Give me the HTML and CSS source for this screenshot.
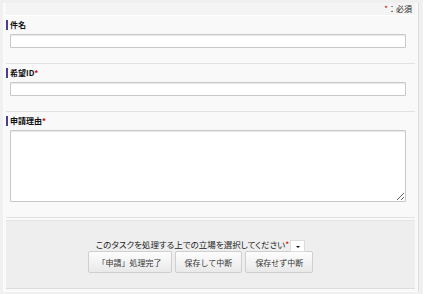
FILE: index.html
```html
<!DOCTYPE html>
<html lang="ja">
<head>
	<meta http-equiv="Content-Type" content="text/html; charset=UTF-8">
	<meta name="viewport" content="width=device-width, initial-scale=1">
	<title>申請</title>
	<link rel="stylesheet" href="styles.css">
</head>
<body>
<div class="form">
  <div class="note"><span class="req">*</span>：必須</div>

  <div class="field">
    <div class="label">件名</div>
    <input class="text" type="text">
  </div>

  <div class="field">
    <div class="label">希望ID<span class="req">*</span></div>
    <input class="text" type="text">
  </div>

  <div class="field">
    <div class="label">申請理由<span class="req">*</span></div>
    <textarea class="area"></textarea>
  </div>

  <div class="actions">
    <div class="role">
      このタスクを処理する上での立場を選択してください<span class="req">*</span><span class="dropdown"></span>
    </div>
    <div class="buttons">
      <button class="btn">「申請」処理完了</button>
      <button class="btn">保存して中断</button>
      <button class="btn">保存せず中断</button>
    </div>
  </div>
</div>
</body>
</html>
```

FILE: styles.css
```css
html,
body {
  width: 100%;
  height: 100%;
}
body {
  margin: 0;
  padding: 3px 4px 0 3px;
  box-sizing: border-box;
  background-color: #f0f0f0;
  font-family: "Noto Sans CJK JP", "Liberation Sans", sans-serif;
  font-size: 8px;
  color: #222;
}
.form {
  background-color: #f9f9f9;
  border-left: 1px solid #fcfcfc;
  border-right: 1px solid #dcdcdc;
  border-bottom: 1px solid #fcfcfc;
  padding: 0 3px 2px 2px;
}
.req {
  color: #c00;
}
.note {
  height: 12px;
  line-height: 12px;
  text-align: right;
  padding-right: 3px;
  background-color: #f4f4f4;
  border-bottom: 1px solid #fff;
}
.field {
  padding: 4px 0 15px;
  border-bottom: 1px solid #e2e2e2;
}
.label {
  height: 10px;
  line-height: 10px;
  margin-bottom: 4px;
  padding-left: 2px;
  border-left: 2px solid #4a3f8c;
  font-weight: bold;
  color: #111;
}
.text,
.area {
  display: block;
  box-sizing: border-box;
  width: 396px;
  margin: 0 0 0 4px;
  padding: 0;
  border: 1px solid #c8c8c8;
  border-radius: 1px;
  background-color: #fff;
  box-shadow: inset 0 1px 1px #e8e8e8;
}
.text {
  height: 14px;
}
.area {
  height: 72px;
  resize: vertical;
}
.actions {
  margin-top: 2px;
  height: 69px;
  box-sizing: border-box;
  padding: 16px 20px 0 0;
  background-color: #eeeeee;
  border-top: 1px solid #e4e4e4;
  border-bottom: 1px solid #dcdcdc;
  text-align: center;
}
.role {
  height: 14px;
  line-height: 14px;
  font-size: 8.5px;
  font-feature-settings: "palt";
  color: #222;
}
.dropdown {
  display: inline-block;
  position: relative;
  vertical-align: middle;
  width: 15px;
  height: 12px;
  margin-left: 1px;
  box-sizing: border-box;
  background-color: #fff;
  border: 1px solid #ddd;
}
.dropdown::after {
  content: "";
  position: absolute;
  left: 5px;
  top: 5px;
  border-left: 2px solid transparent;
  border-right: 2px solid transparent;
  border-top: 2px solid #111;
}
.buttons {
  display: flex;
  justify-content: center;
  gap: 3px;
}
.btn {
  height: 22px;
  padding: 0 9px;
  font-family: inherit;
  font-size: 8px;
  color: #333;
  border: 1px solid #cfcfcf;
  border-radius: 2px;
  background: linear-gradient(#fdfdfd, #e9e9e9);
}
```
